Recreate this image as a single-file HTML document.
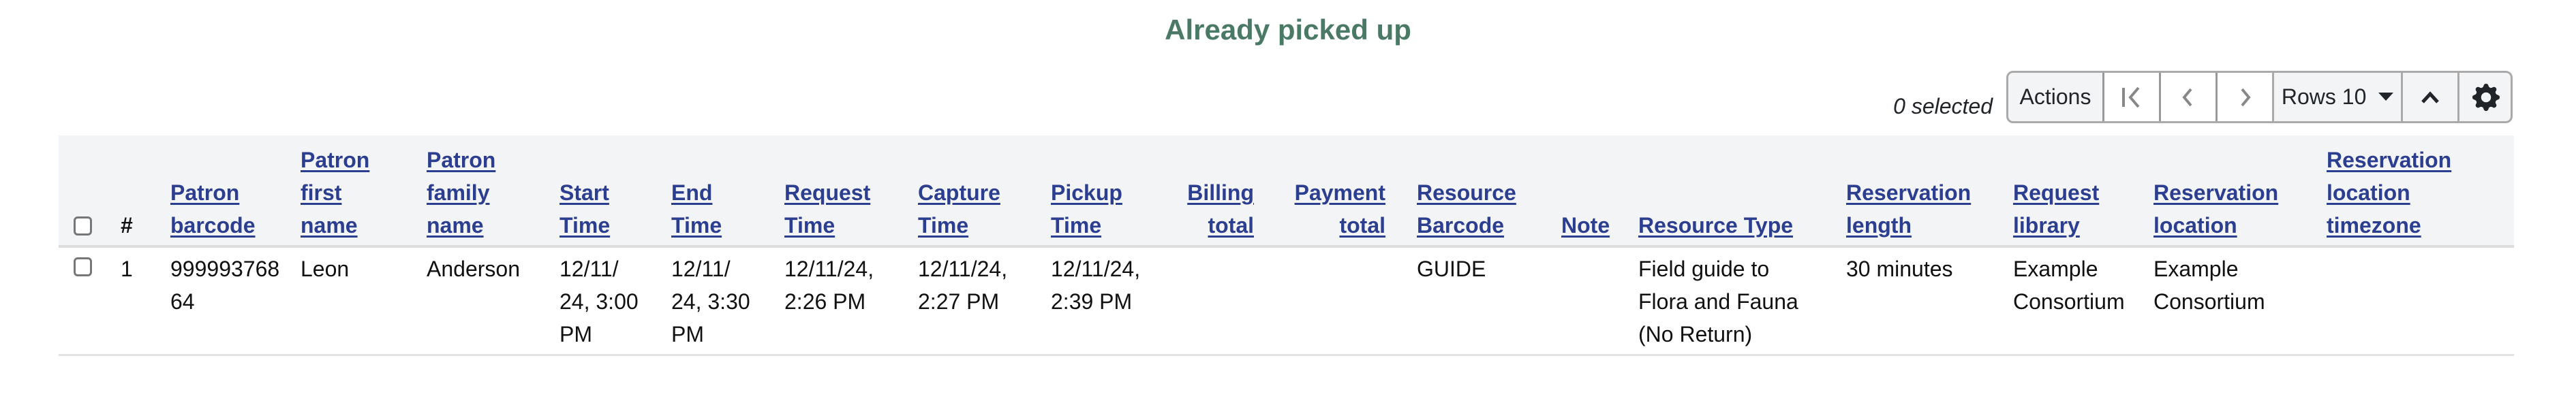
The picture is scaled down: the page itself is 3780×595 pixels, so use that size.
<!DOCTYPE html>
<html><head><meta charset="utf-8"><style>
*{margin:0;padding:0;box-sizing:border-box}
body{width:3780px;height:595px;background:#fff;font-family:"Liberation Sans",sans-serif;position:relative;overflow:hidden;color:#212529}
.t{position:absolute;left:0;width:3780px;top:14px;text-align:center;font-size:42px;color:#4a7a66;font-weight:bold;line-height:60px}
.hbg{position:absolute;left:86px;top:199px;width:3603px;height:161px;background:#f3f4f6}
.hb{position:absolute;left:86px;top:360px;width:3603px;height:4px;background:#dcdcdc}
.rb{position:absolute;left:86px;top:520px;width:3603px;height:3px;background:#e2e2e2}
.h{position:absolute;bottom:240px;font-size:32px;line-height:48px;font-weight:bold;color:#2c3e90;text-decoration:underline;text-decoration-thickness:3px;text-underline-offset:4px;white-space:nowrap}
.r{position:absolute;top:371px;font-size:32px;line-height:48px;white-space:nowrap;color:#111}
.cb{position:absolute;left:108px;width:27px;height:28px;border:3px solid #777;border-radius:6px;background:#fff}
.grp{position:absolute;left:2944px;top:104px;width:743px;height:77px;border:3px solid #aaa;border-radius:10px;overflow:hidden;background:#f3f4f6}
.b{position:absolute;top:0;height:71px;display:flex;align-items:center;justify-content:center;font-size:32px;color:#212529}
.d{position:absolute;top:0;width:3px;height:71px;background:#999}
</style></head><body>
<div class="t">Already picked up</div>
<div style="position:absolute;right:856px;top:136px;font-size:32px;font-style:italic;line-height:40px">0 selected</div>
<div class="grp">
 <div class="b" style="left:0;width:138px">Actions</div>
 <div class="b" style="left:141px;width:80px;background:#fff"><svg width="36" height="36" viewBox="0 0 36 36" fill="none" stroke="#888" stroke-width="4"><path d="M6 4v28M28 4L16 18l12 14"/></svg></div>
 <div class="b" style="left:224px;width:80px;background:#fff"><svg width="36" height="36" viewBox="0 0 36 36" fill="none" stroke="#888" stroke-width="4"><path d="M22 6L12 18l10 12"/></svg></div>
 <div class="b" style="left:307px;width:80px;background:#fff"><svg width="36" height="36" viewBox="0 0 36 36" fill="none" stroke="#888" stroke-width="4"><path d="M14 6l10 12-10 12"/></svg></div>
 <div class="b" style="left:390px;width:186px">Rows 10&nbsp;&nbsp;<svg width="22" height="14" viewBox="0 0 22 14"><path d="M0 0h22L11 12z" fill="#212529"/></svg></div>
 <div class="b" style="left:579px;width:80px"><svg width="30" height="20" viewBox="0 0 30 20" fill="none" stroke="#212529" stroke-width="5"><path d="M4 17L15 5l11 12"/></svg></div>
 <div class="b" style="left:662px;width:78px"><svg width="40" height="40" viewBox="0 0 16 16"><path fill="#212529" d="M9.4 1.1c-.4-1.5-2.4-1.5-2.8 0l-.1.3a1.5 1.5 0 0 1-2.1.9l-.3-.2c-1.3-.8-2.8.7-2 2l.2.3a1.5 1.5 0 0 1-.9 2.1l-.3.1c-1.5.4-1.5 2.4 0 2.8l.3.1a1.5 1.5 0 0 1 .9 2.1l-.2.3c-.8 1.3.7 2.8 2 2l.3-.2a1.5 1.5 0 0 1 2.1.9l.1.3c.4 1.5 2.4 1.5 2.8 0l.1-.3a1.5 1.5 0 0 1 2.1-.9l.3.2c1.3.8 2.8-.7 2-2l-.2-.3a1.5 1.5 0 0 1 .9-2.1l.3-.1c1.5-.4 1.5-2.4 0-2.8l-.3-.1a1.5 1.5 0 0 1-.9-2.1l.2-.3c.8-1.3-.7-2.8-2-2l-.3.2a1.5 1.5 0 0 1-2.1-.9zM8 10.9a2.9 2.9 0 1 1 0-5.8 2.9 2.9 0 0 1 0 5.8z"/></svg></div>
 <div class="d" style="left:138px"></div><div class="d" style="left:221px"></div><div class="d" style="left:304px"></div><div class="d" style="left:387px;background:#aaa"></div><div class="d" style="left:576px;background:#aaa"></div><div class="d" style="left:659px;background:#aaa"></div>
</div>
<div class="hbg"></div><div class="hb"></div><div class="rb"></div>
<div class="cb" style="top:318px"></div>
<div class="cb" style="top:378px"></div>
<div class="r" style="top:307px;left:177px;font-weight:bold">#</div>
<div class="h" style="left:250px">Patron<br>barcode</div>
<div class="h" style="left:441px">Patron<br>first<br>name</div>
<div class="h" style="left:626px">Patron<br>family<br>name</div>
<div class="h" style="left:821px">Start<br>Time</div>
<div class="h" style="left:985px">End<br>Time</div>
<div class="h" style="left:1151px">Request<br>Time</div>
<div class="h" style="left:1347px">Capture<br>Time</div>
<div class="h" style="left:1542px">Pickup<br>Time</div>
<div class="h" style="right:1940px;text-align:right">Billing<br>total</div>
<div class="h" style="right:1747px;text-align:right">Payment<br>total</div>
<div class="h" style="left:2079px">Resource<br>Barcode</div>
<div class="h" style="left:2291px">Note</div>
<div class="h" style="left:2404px">Resource Type</div>
<div class="h" style="left:2709px">Reservation<br>length</div>
<div class="h" style="left:2954px">Request<br>library</div>
<div class="h" style="left:3160px">Reservation<br>location</div>
<div class="h" style="left:3414px">Reservation<br>location<br>timezone</div>
<div class="r" style="left:177px">1</div>
<div class="r" style="left:250px">999993768<br>64</div>
<div class="r" style="left:441px">Leon</div>
<div class="r" style="left:626px">Anderson</div>
<div class="r" style="left:821px">12/11/<br>24, 3:00<br>PM</div>
<div class="r" style="left:985px">12/11/<br>24, 3:30<br>PM</div>
<div class="r" style="left:1151px">12/11/24,<br>2:26 PM</div>
<div class="r" style="left:1347px">12/11/24,<br>2:27 PM</div>
<div class="r" style="left:1542px">12/11/24,<br>2:39 PM</div>
<div class="r" style="left:2079px">GUIDE</div>
<div class="r" style="left:2404px">Field guide to<br>Flora and Fauna<br>(No Return)</div>
<div class="r" style="left:2709px">30 minutes</div>
<div class="r" style="left:2954px">Example<br>Consortium</div>
<div class="r" style="left:3160px">Example<br>Consortium</div>
</body></html>
